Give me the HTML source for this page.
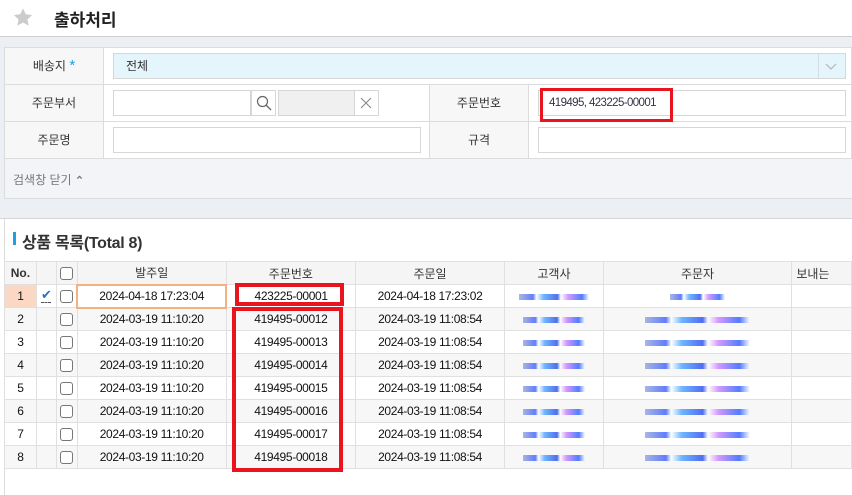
<!DOCTYPE html>
<html><head><meta charset="utf-8"><style>
*{box-sizing:border-box;margin:0;padding:0}
body{width:852px;height:495px;overflow:hidden;background:#fff;font-family:"Liberation Sans","Noto Sans CJK KR",sans-serif;font-size:12px;color:#222;position:relative}
.abs{position:absolute}
.lbl{position:absolute;background:#f7f7f7;text-align:center;color:#333;font-size:12px}
.inp{position:absolute;background:#fff;border:1px solid #d6d6d6}
table{border-collapse:collapse;position:absolute;left:4px;top:261px;table-layout:fixed}
td,th{height:23px;border:1px solid #e0e0e0;text-align:center;font-size:12px;color:#111;font-weight:normal;white-space:nowrap;overflow:hidden;letter-spacing:-0.35px}
th{background:#f5f5f5;color:#333;letter-spacing:0}
tr.g td{background:#f7f7f7}
.cb{display:inline-block;width:13px;height:13px;border:1px solid #777;border-radius:3px;background:#fff;vertical-align:middle}
.bl{display:inline-block;height:6px;vertical-align:middle;background:linear-gradient(90deg,#9ad 0,#46f 20%,#fff 25%,#5af 35%,#35e 55%,#fff 60%,#c8f 70%,#36f 90%,#fff 100%);opacity:.85}
.red{position:absolute;border:4px solid #e8141e}
</style></head><body>
<svg class="abs" style="left:12px;top:7px" width="22" height="21" viewBox="0 0 24 24"><path d="M12 1.5l3.2 6.8 7.3.8-5.4 5 1.5 7.3L12 17.7l-6.6 3.7 1.5-7.3-5.4-5 7.3-.8z" fill="#ccc"/></svg>
<div class="abs" style="left:54px;top:6px;font-size:17px;font-weight:bold;color:#222">출하처리</div>
<div class="abs" style="left:0;top:36px;width:852px;height:183px;background:#eceff4;border-top:1px solid #cfcfcf;border-bottom:1px solid #d6d6d6"></div>
<div class="abs" style="left:4px;top:47px;width:848px;height:152px;background:#fff;border:1px solid #dcdcdc"></div>
<div class="abs" style="left:5px;top:158px;width:847px;height:40px;background:#f3f4f7;border-top:1px solid #dcdcdc"></div>
<div class="abs" style="left:5px;top:84px;width:847px;height:1px;background:#dcdcdc"></div>
<div class="abs" style="left:5px;top:121px;width:847px;height:1px;background:#dcdcdc"></div>
<div class="lbl" style="left:5px;top:48px;width:99px;height:36px;line-height:36px;border-right:1px solid #dcdcdc">배송지 <span style="color:#1da1e2;font-size:15px">*</span></div>
<div class="lbl" style="left:5px;top:85px;width:99px;height:36px;line-height:36px;border-right:1px solid #dcdcdc">주문부서</div>
<div class="lbl" style="left:5px;top:122px;width:99px;height:36px;line-height:36px;border-right:1px solid #dcdcdc">주문명</div>
<div class="lbl" style="left:429px;top:85px;width:100px;height:36px;line-height:36px;border-left:1px solid #dcdcdc;border-right:1px solid #dcdcdc">주문번호</div>
<div class="lbl" style="left:429px;top:122px;width:100px;height:36px;line-height:36px;border-left:1px solid #dcdcdc;border-right:1px solid #dcdcdc">규격</div>
<div class="inp" style="left:113px;top:53px;width:733px;height:26px;background:#e4f5fc;padding-left:12px;line-height:24px;color:#333">전체</div>
<div class="abs" style="left:818px;top:54px;width:1px;height:24px;background:#cfdde4"></div>
<svg class="abs" style="left:825px;top:61px" width="12" height="10"><path d="M1 3l5 5 5-5" stroke="#bbb" fill="none" stroke-width="1.3"/></svg>
<div class="inp" style="left:113px;top:90px;width:138px;height:26px"></div>
<div class="inp" style="left:251px;top:90px;width:25px;height:26px"></div>
<svg class="abs" style="left:256px;top:95px" width="16" height="16"><circle cx="6.5" cy="6.5" r="5" stroke="#666" fill="none" stroke-width="1.2"/><path d="M10 10l5 5" stroke="#666" stroke-width="1.3"/></svg>
<div class="inp" style="left:278px;top:90px;width:101px;height:26px;background:#f0f0f0"></div>
<div class="abs" style="left:354px;top:91px;width:24px;height:24px;background:#fff;border-left:1px solid #d6d6d6"></div>
<svg class="abs" style="left:360px;top:97px" width="12" height="12"><path d="M1 1l10 10M11 1L1 11" stroke="#888" stroke-width="1.1"/></svg>
<div class="inp" style="left:538px;top:90px;width:308px;height:26px;padding-left:10px;line-height:24px;color:#334;font-size:11.5px;letter-spacing:-0.6px">419495, 423225-00001</div>
<div class="inp" style="left:113px;top:127px;width:308px;height:26px"></div>
<div class="inp" style="left:538px;top:127px;width:308px;height:26px"></div>
<div class="abs" style="left:13px;top:171px;color:#777;font-size:12px">검색창 닫기 <span style="font-size:11px;font-weight:bold">&#8963;</span></div>
<div class="red" style="left:540px;top:88px;width:133px;height:34px;border-width:3px"></div>
<div class="abs" style="left:4px;top:219px;width:1px;height:276px;background:#dcdcdc"></div>
<div class="abs" style="left:13px;top:232px;width:3px;height:13px;background:#1da1e2"></div>
<div class="abs" style="left:22px;top:229px;font-size:16px;font-weight:bold;color:#333;letter-spacing:-0.3px">상품 목록(Total 8)</div>
<table>
<colgroup><col style="width:32px"><col style="width:20px"><col style="width:21px"><col style="width:150px"><col style="width:130px"><col style="width:150px"><col style="width:99px"><col style="width:190px"><col style="width:60px"></colgroup>
<tr><th style="font-weight:bold">No.</th><th></th><th><span class="cb"></span></th><th>발주일</th><th>주문번호</th><th>주문일</th><th>고객사</th><th>주문자</th><th style="text-align:left;padding-left:4px">보내는</th></tr>
<tr><td style="background:#fbd8c3">1</td><td style="color:#2a6fc9;font-size:13px;line-height:10px">✔<div style="border-top:1px dashed #555;width:10px;margin:2px auto 0"></div></td><td><span class="cb"></span></td><td style="border:2px solid #f5b081">2024-04-18 17:23:04</td><td>423225-00001</td><td>2024-04-18 17:23:02</td><td><span class="bl" style="width:70px"></span></td><td><span class="bl" style="width:55px"></span></td><td></td></tr>
<tr class="g"><td>2</td><td></td><td><span class="cb"></span></td><td>2024-03-19 11:10:20</td><td>419495-00012</td><td>2024-03-19 11:08:54</td><td><span class="bl" style="width:62px"></span></td><td><span class="bl" style="width:105px"></span></td><td></td></tr>
<tr><td>3</td><td></td><td><span class="cb"></span></td><td>2024-03-19 11:10:20</td><td>419495-00013</td><td>2024-03-19 11:08:54</td><td><span class="bl" style="width:62px"></span></td><td><span class="bl" style="width:105px"></span></td><td></td></tr>
<tr class="g"><td>4</td><td></td><td><span class="cb"></span></td><td>2024-03-19 11:10:20</td><td>419495-00014</td><td>2024-03-19 11:08:54</td><td><span class="bl" style="width:62px"></span></td><td><span class="bl" style="width:105px"></span></td><td></td></tr>
<tr><td>5</td><td></td><td><span class="cb"></span></td><td>2024-03-19 11:10:20</td><td>419495-00015</td><td>2024-03-19 11:08:54</td><td><span class="bl" style="width:62px"></span></td><td><span class="bl" style="width:105px"></span></td><td></td></tr>
<tr class="g"><td>6</td><td></td><td><span class="cb"></span></td><td>2024-03-19 11:10:20</td><td>419495-00016</td><td>2024-03-19 11:08:54</td><td><span class="bl" style="width:62px"></span></td><td><span class="bl" style="width:105px"></span></td><td></td></tr>
<tr><td>7</td><td></td><td><span class="cb"></span></td><td>2024-03-19 11:10:20</td><td>419495-00017</td><td>2024-03-19 11:08:54</td><td><span class="bl" style="width:62px"></span></td><td><span class="bl" style="width:105px"></span></td><td></td></tr>
<tr class="g"><td>8</td><td></td><td><span class="cb"></span></td><td>2024-03-19 11:10:20</td><td>419495-00018</td><td>2024-03-19 11:08:54</td><td><span class="bl" style="width:62px"></span></td><td><span class="bl" style="width:105px"></span></td><td></td></tr>
</table>
<div class="red" style="left:235px;top:283px;width:109px;height:23px"></div>
<div class="red" style="left:232px;top:307px;width:111px;height:165px"></div>
</body></html>
